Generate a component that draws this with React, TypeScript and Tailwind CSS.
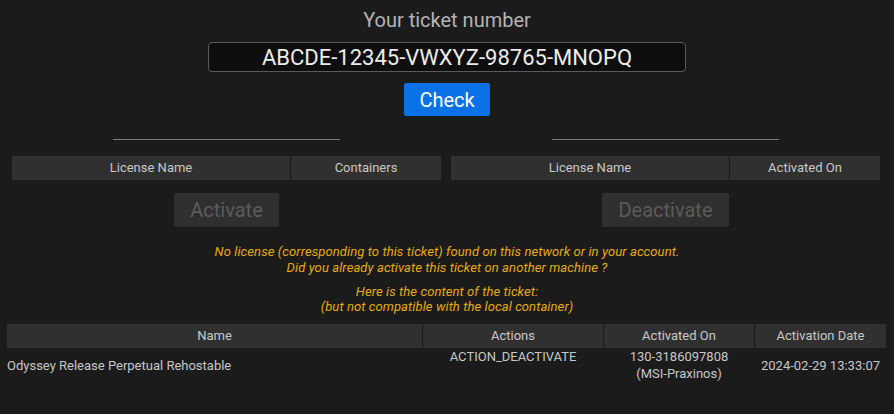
export default function App() {
  const font = { fontFamily: 'Roboto, "Liberation Sans", sans-serif' };

  return (
    <div className="min-h-[414px] w-[894px] bg-[#1b1b1b] text-[#c8c8c8]" style={font}>
      <div className="flex flex-col items-center pt-[6px]">
        <div className="text-[20px] leading-[28px] text-[#b4b4b4]">Your ticket number</div>
        <div className="mt-[8px] flex h-[30px] w-[478px] items-center justify-center rounded-[4px] border border-[#5a5a5a] bg-[#0e0e0e] text-[22px] text-[#ececec]">
          ABCDE-12345-VWXYZ-98765-MNOPQ
        </div>
        <button className="mt-[11px] h-[33px] w-[86px] rounded-[2px] bg-[#0a72e6] text-[20px] text-white">
          Check
        </button>
      </div>

      <div className="mt-[23px] ml-[12px] grid w-[868px] grid-cols-2 gap-x-[10px]">
        <Panel cols={['License Name', 'Containers']} split="w-[278px]" label="Activate" btn="w-[105px]" />
        <Panel cols={['License Name', 'Activated On']} split="w-[278px]" label="Deactivate" btn="w-[127px]" />
      </div>

      <div className="mt-[17px] text-center text-[13px] italic leading-[16px] tracking-[0.1px] text-[#e8aa10]">
        <div>No license (corresponding to this ticket) found on this network or in your account.</div>
        <div>Did you already activate this ticket on another machine ?</div>
        <div className="mt-[8px]">Here is the content of the ticket:</div>
        <div className="-mt-[1px]">(but not compatible with the local container)</div>
      </div>

      <div className="mt-[9px] ml-[7px] w-[880px] text-[13px]">
        <div className="grid h-[24px] grid-cols-[415px_180px_150px_131px] gap-x-px">
          {['Name', 'Actions', 'Activated On', 'Activation Date'].map((c) => (
            <div key={c} className="flex items-center justify-center bg-[#303030] text-[#c8c8c8]">
              {c}
            </div>
          ))}
        </div>
        <div className="grid grid-cols-[415px_180px_150px_131px] gap-x-px leading-[17px] text-[#c8c8c8]">
          <div className="flex items-center pt-[1px]">Odyssey Release Perpetual Rehostable</div>
          <div className="text-center">ACTION_DEACTIVATE</div>
          <div className="text-center">
            <div>130-3186097808</div>
            <div>(MSI-Praxinos)</div>
          </div>
          <div className="flex items-center justify-center pt-[1px]">2024-02-29 13:33:07</div>
        </div>
      </div>
    </div>
  );
}

function Panel({ cols, split, label, btn }: { cols: string[]; split: string; label: string; btn: string }) {
  return (
    <div className="flex flex-col items-center">
      <div className="h-px w-[227px] bg-[#7a7a7a]" />
      <div className="mt-[16px] flex h-[24px] w-full gap-x-px text-[13px]">
        <div className={`${split} flex items-center justify-center bg-[#303030]`}>{cols[0]}</div>
        <div className="flex flex-1 items-center justify-center bg-[#303030]">{cols[1]}</div>
      </div>
      <button className={`${btn} mt-[13px] h-[34px] rounded-[2px] bg-[#2f2f2f] text-[20px] text-[#5c5c5c]`}>
        {label}
      </button>
    </div>
  );
}
